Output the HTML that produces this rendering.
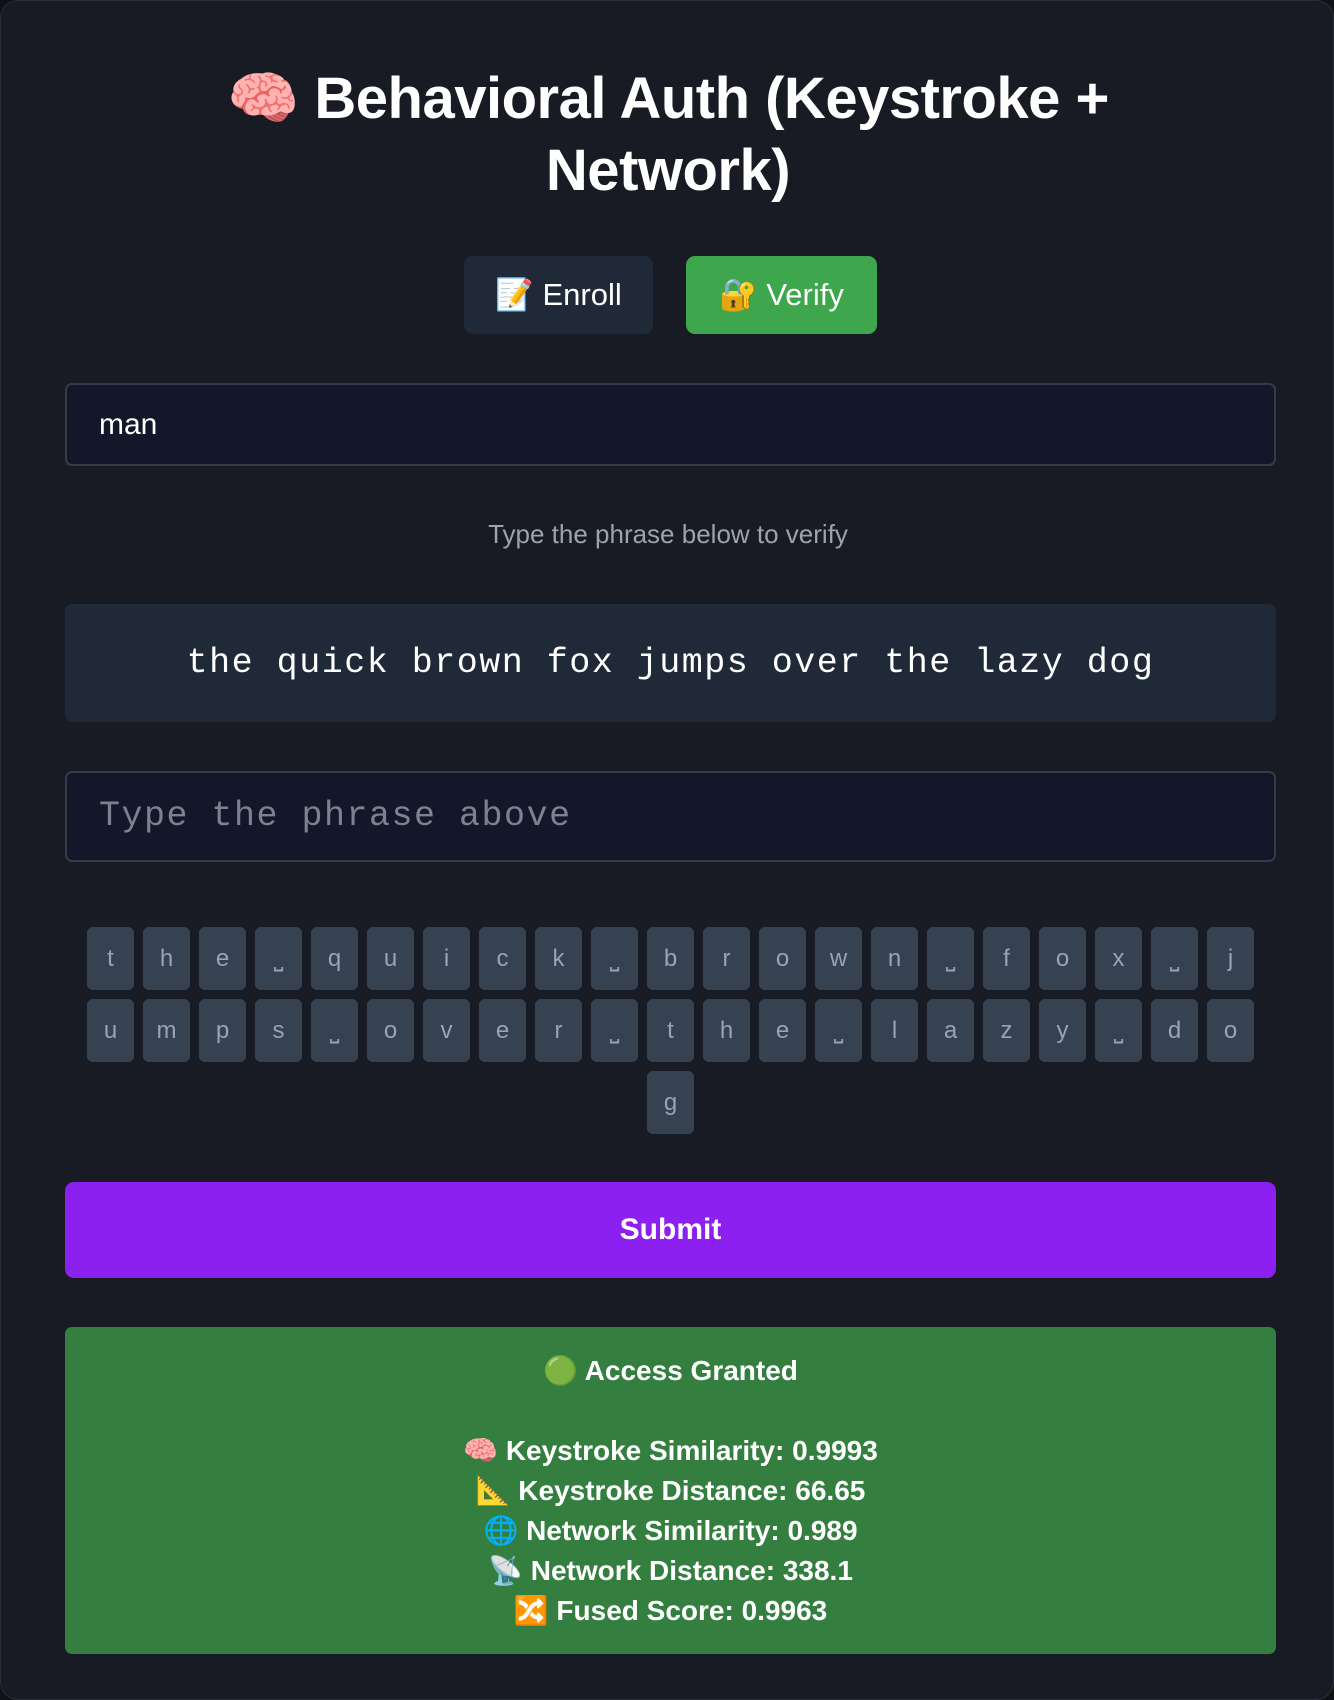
<!DOCTYPE html>
<html><head><meta charset="utf-8"><style>
*{box-sizing:border-box;margin:0;padding:0}
body{width:1334px;height:1684px;background:#0f1117;font-family:"Liberation Sans","Noto Sans CJK SC",sans-serif;color:#fff;overflow:hidden}
.wrap{position:absolute;left:0;top:0;width:1334px;height:1700px;background:#181b23;border-radius:18px;border:1px solid #2a2e38}
h1{position:absolute;top:62px;left:0;width:1334px;text-align:center;font-size:58px;line-height:72px;font-weight:bold;letter-spacing:-0.5px}
.btn{position:absolute;top:255px;height:78px;border-radius:9px;font-size:31px;line-height:78px;text-align:center}
.in{position:absolute;left:64px;width:1211px;background:#121829;border:2px solid #343b4b;border-radius:7px}
.keys{position:absolute;left:86px;width:1167px;display:flex;flex-wrap:wrap;gap:9px 9px;justify-content:center}
.k{width:47px;height:63px;background:#364152;border-radius:6px;color:#9aa3b2;font-size:24px;text-align:center;line-height:63px}
.res div{line-height:40px}
</style></head><body><div class="wrap">
<h1>🧠 Behavioral Auth (Keystroke +<br>Network)</h1>
<div class="btn" style="left:463px;width:189px;background:#1f2937">📝 Enroll</div>
<div class="btn" style="left:685px;width:191px;background:#3ea74d">🔐 Verify</div>
<div class="in" style="top:382px;height:83px;font-size:30px;line-height:79px;padding-left:32px">man</div>
<div style="position:absolute;top:518px;width:1334px;text-align:center;font-size:26px;color:#9ca3af">Type the phrase below to verify</div>
<div style="position:absolute;left:64px;top:603px;width:1211px;height:118px;background:#1f2937;border-radius:7px;text-align:center;line-height:118px;font-family:'Liberation Mono',monospace;font-size:35px;letter-spacing:1.5px">the quick brown fox jumps over the lazy dog</div>
<div class="in" style="top:770px;height:91px;font-family:'Liberation Mono',monospace;font-size:35px;line-height:87px;padding-left:32px;color:#7b8290;letter-spacing:1.5px">Type the phrase above</div>
<div class="keys" style="top:926px">
<div class="k">t</div><div class="k">h</div><div class="k">e</div><div class="k">⎵</div><div class="k">q</div><div class="k">u</div><div class="k">i</div><div class="k">c</div><div class="k">k</div><div class="k">⎵</div><div class="k">b</div><div class="k">r</div><div class="k">o</div><div class="k">w</div><div class="k">n</div><div class="k">⎵</div><div class="k">f</div><div class="k">o</div><div class="k">x</div><div class="k">⎵</div><div class="k">j</div>
<div class="k">u</div><div class="k">m</div><div class="k">p</div><div class="k">s</div><div class="k">⎵</div><div class="k">o</div><div class="k">v</div><div class="k">e</div><div class="k">r</div><div class="k">⎵</div><div class="k">t</div><div class="k">h</div><div class="k">e</div><div class="k">⎵</div><div class="k">l</div><div class="k">a</div><div class="k">z</div><div class="k">y</div><div class="k">⎵</div><div class="k">d</div><div class="k">o</div>
<div class="k">g</div>
</div>
<div style="position:absolute;left:64px;top:1181px;width:1211px;height:96px;background:#8b20f0;border-radius:9px;text-align:center;line-height:96px;font-size:30px;font-weight:bold">Submit</div>
<div class="res" style="position:absolute;left:64px;top:1326px;width:1211px;height:327px;background:#347f3f;border-radius:7px;text-align:center;font-size:28px;font-weight:bold;padding-top:24px">
<div>🟢 Access Granted</div><div>&nbsp;</div>
<div>🧠 Keystroke Similarity: 0.9993</div><div>📐 Keystroke Distance: 66.65</div><div>🌐 Network Similarity: 0.989</div><div>📡 Network Distance: 338.1</div><div>🔀 Fused Score: 0.9963</div>
</div>
</div></body></html>
